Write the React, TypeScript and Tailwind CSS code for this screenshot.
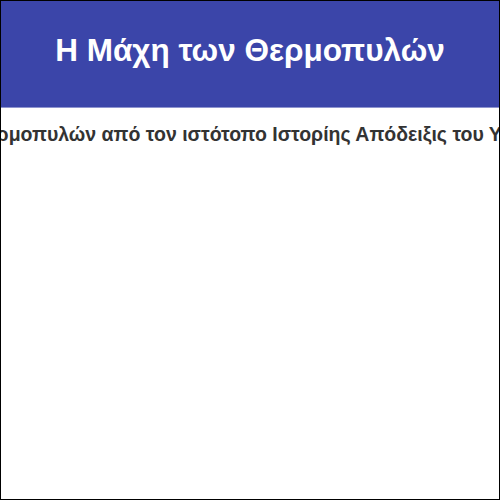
import React from "react";

export default function App() {
  return (
    <div className="w-[500px] h-[500px] border border-black bg-white overflow-hidden flex flex-col" style={{ fontFamily: '"Liberation Sans", Arial, sans-serif' }}>
      <div className="h-[107px] shrink-0 bg-[#3b45a9] flex items-center justify-center border-b border-[#8e94cf]">
        <h1 className="text-white text-[31.5px] font-bold leading-none mb-[6px]">Η Μάχη των Θερμοπυλών</h1>
      </div>
      <div className="mt-[14px] overflow-hidden whitespace-nowrap">
        <p className="text-[19.5px] font-bold text-[#333] leading-[24px] ml-[-146px]">
          Η Μάχη των Θερμοπυλών από τον ιστότοπο Ιστορίης Απόδειξις του Υπουργείου Πολιτισμού
        </p>
      </div>
    </div>
  );
}
